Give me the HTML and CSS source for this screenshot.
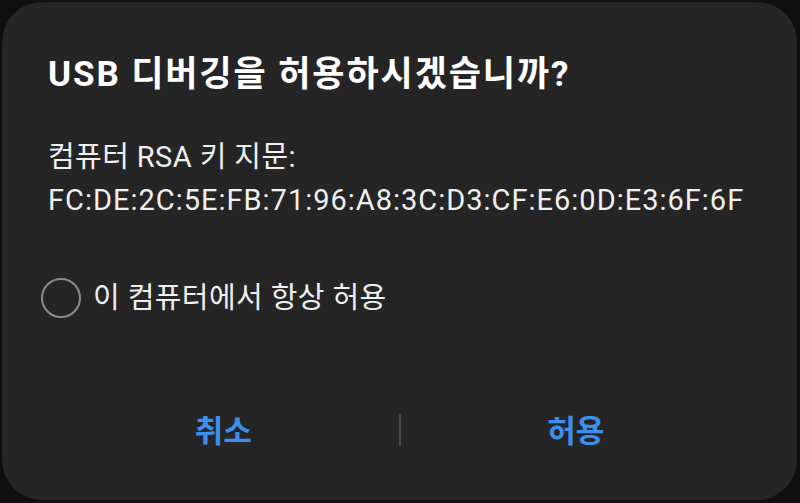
FILE: index.html
```html
<!DOCTYPE html>
<html lang="ko">
<head>
<meta charset="utf-8">
<link rel="stylesheet" href="styles.css">
</head>
<body>
<div class="dialog">
  <h1 class="title">USB 디버깅을 허용하시겠습니까?</h1>
  <div class="message">
    <p class="line">컴퓨터 RSA 키 지문:</p>
    <p class="line fingerprint">FC:DE:2C:5E:FB:71:96:A8:3C:D3:CF:E6:0D:E3:6F:6F</p>
  </div>
  <label class="check">
    <span class="radio"></span>
    <span class="check-text">이 컴퓨터에서 항상 허용</span>
  </label>
  <div class="buttons">
    <button class="btn">취소</button>
    <span class="divider"></span>
    <button class="btn">허용</button>
  </div>
</div>
</body>
</html>
```

FILE: styles.css
```css
html, body {
  margin: 0;
  padding: 0;
  background: #0f0f0f;
  width: 800px;
  height: 503px;
  overflow: hidden;
}
.dialog {
  margin: 2px 3px 0 2px;
  height: 498px;
  box-sizing: border-box;
  background: #252525;
  border-radius: 40px;
  padding: 49px 0 0 46px;
  display: flex;
  flex-direction: column;
  font-family: Roboto, "Noto Sans CJK KR", sans-serif;
  color: #f0f0f0;
}
.title {
  margin: 0;
  font-family: Roboto, "Noto Sans CJK KR", sans-serif;
  font-weight: 700;
  font-size: 35px;
  letter-spacing: 1.9px;
  line-height: 48px;
  color: #ffffff;
}
.message {
  margin-top: 37px;
}
.line {
  margin: 0;
  font-size: 29px;
  line-height: 43px;
  letter-spacing: 0.4px;
}
.fingerprint {
  letter-spacing: 1px;
}
.check {
  margin-top: 56px;
  margin-left: -7px;
  display: flex;
  align-items: center;
  gap: 12px;
}
.radio {
  width: 36px;
  height: 36px;
  border: 2px solid #8c8c8c;
  border-radius: 50%;
  flex: none;
}
.check-text {
  font-size: 29px;
  line-height: 40px;
  letter-spacing: 0.4px;
}
.buttons {
  margin-top: 96px;
  margin-left: 0;
  margin-right: 46px;
  display: flex;
  align-items: center;
  height: 36px;
}
.btn {
  flex: 1;
  background: none;
  border: 0;
  padding: 0;
  font-family: Roboto, "Noto Sans CJK KR", sans-serif;
  font-weight: 700;
  font-size: 31px;
  line-height: 36px;
  color: #3d8fee;
}
.divider {
  width: 2px;
  height: 32px;
  margin-top: -4px;
  background: #4a4a4a;
}
```
